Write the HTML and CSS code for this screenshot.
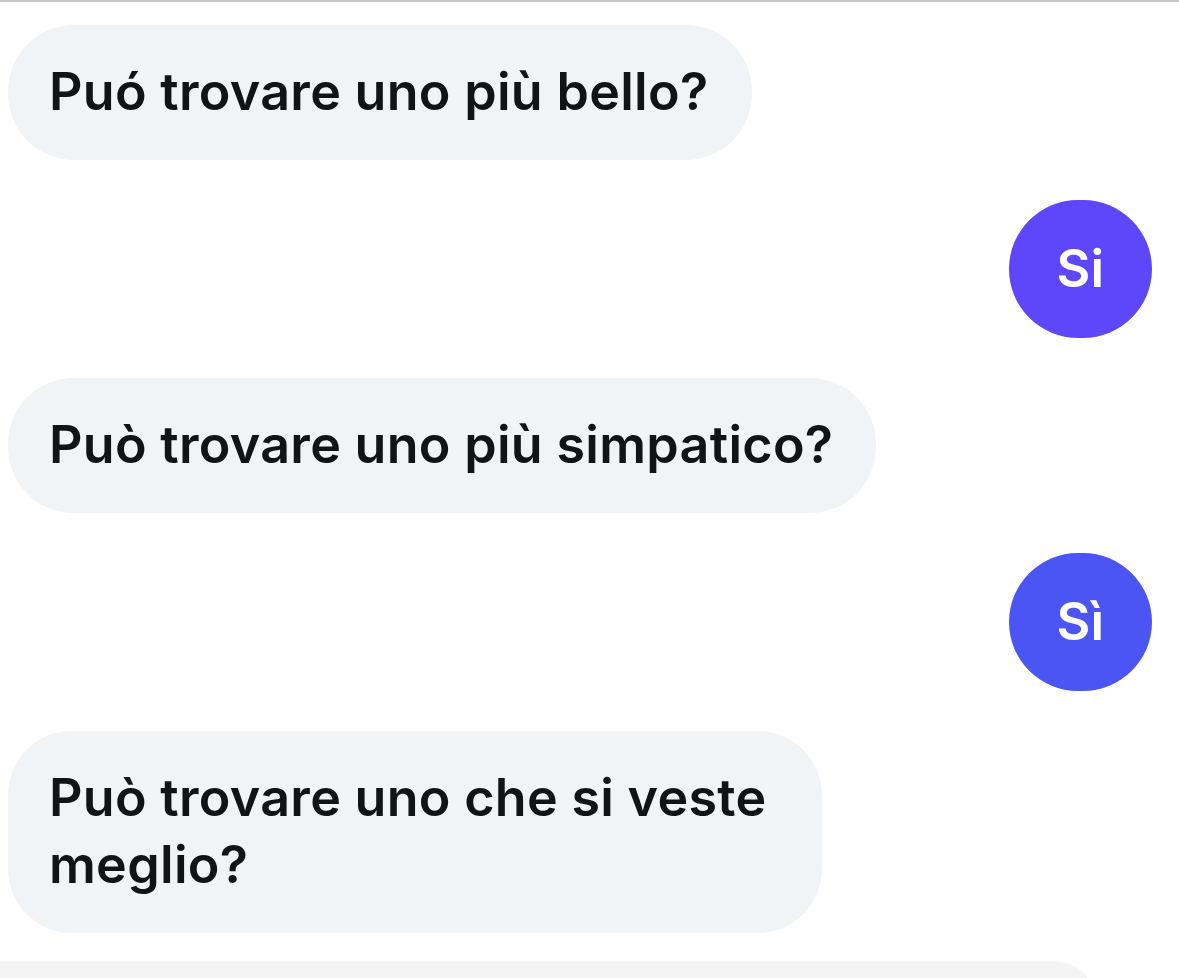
FILE: index.html
```html
<!DOCTYPE html>
<html lang="it">
<head>
<meta charset="utf-8">
<title>Chat</title>
<link rel="stylesheet" href="styles.css">
</head>
<body>
<div class="topline"></div>
<main class="chat">
  <div class="msg in">Puó trovare uno più bello?</div>
  <div class="msg out out-a">Si</div>
  <div class="msg in">Può trovare uno più simpatico?</div>
  <div class="msg out out-b">Sì</div>
  <div class="msg in wide">Può trovare uno che si veste meglio?</div>
  <div class="next"></div>
</main>
</body>
</html>
```
FILE: styles.css
```css
html, body {
  margin: 0;
  padding: 0;
  background: #ffffff;
  overflow: hidden;
}
body {
  font-family: "Inter", "Liberation Sans", sans-serif;
  font-weight: 600;
  font-size: 52px;
  letter-spacing: 0.3px;
  line-height: 67px;
  color: #111316;
  height: 978px;
}
.topline {
  height: 2px;
  background: #c9c9c9;
}
.chat {
  display: flex;
  flex-direction: column;
  gap: 40px;
  padding: 23px 27px 0 8px;
}
.msg {
  width: fit-content;
  box-sizing: border-box;
}
.in {
  align-self: flex-start;
  background: #f1f4f7;
  border-radius: 66px;
  padding: 33px 43px 35px 41px;
}
.wide {
  max-width: 814px;
  border-radius: 64px;
  padding-bottom: 35px;
}
.out {
  align-self: flex-end;
  color: #ffffff;
  font-weight: 600;
  border-radius: 70px;
  padding: 35px 42px 36px 42px;
  min-width: 143px;
  text-align: center;
}
.out-a { background: #5e46fa; }
.out-b { background: #4b55f4; }
.next {
  margin-top: -11px;
  margin-left: -8px;
  width: 1095px;
  height: 80px;
  background: #f4f4f4;
  border-radius: 0 40px 0 0;
  box-shadow: 0 -1px 2px rgba(0,0,0,0.04);
}
```
